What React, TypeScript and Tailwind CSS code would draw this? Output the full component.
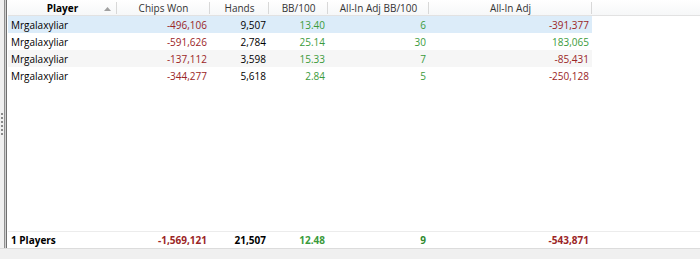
import React from 'react';

type Row = {
  player: string;
  chips: string;
  hands: string;
  bb: string;
  aiBb: string;
  aiAdj: string;
  aiAdjPos?: boolean;
};

const rows: Row[] = [
  { player: 'Mrgalaxyliar', chips: '-496,106', hands: '9,507', bb: '13.40', aiBb: '6', aiAdj: '-391,377' },
  { player: 'Mrgalaxyliar', chips: '-591,626', hands: '2,784', bb: '25.14', aiBb: '30', aiAdj: '183,065', aiAdjPos: true },
  { player: 'Mrgalaxyliar', chips: '-137,112', hands: '3,598', bb: '15.33', aiBb: '7', aiAdj: '-85,431' },
  { player: 'Mrgalaxyliar', chips: '-344,277', hands: '5,618', bb: '2.84', aiBb: '5', aiAdj: '-250,128' },
];

const red = 'text-[#9b2526]';
const green = 'text-[#3b9b3b]';

// header cell with the little splitter on its right
function Head({ w, label, bold, sort }: { w: string; label: string; bold?: boolean; sort?: boolean }) {
  return (
    <div className={`${w} relative flex h-full items-center justify-center`}>
      <span className={bold ? 'font-bold text-black' : 'text-[#333]'}>{label}</span>
      {sort && (
        <svg className="absolute right-[6px] top-[7px]" width="7" height="4" viewBox="0 0 7 4">
          <path d="M3.5 0 L7 4 L0 4 Z" fill="#a0a0a0" />
        </svg>
      )}
      <div className="absolute right-0 top-[2px] h-[12px] w-px bg-[#d8d8d8]" />
    </div>
  );
}

export default function App() {
  return (
    <div
      className="flex h-[259px] w-[700px] flex-col overflow-hidden bg-white text-[10px] leading-none text-black"
      style={{ fontFamily: '"Open Sans", "Liberation Sans", sans-serif' }}
    >
      <div className="flex min-h-0 flex-1">
        {/* splitter grip */}
        <div className="flex w-[4px] flex-col items-center justify-center gap-[2px] bg-[#f0f0f0]">
          {Array.from({ length: 6 }).map((_, i) => (
            <div key={i} className="h-[2px] w-[2px] bg-[#8a8a8a]" />
          ))}
        </div>
        <div className="w-px bg-[#8f8f8f]" />
        <div className="w-[1px] bg-[#d0d0d0]" />
        <div className="w-px bg-[#6f6f6f]" />
        <div className="w-[1px] bg-white" />

        <div className="flex min-w-0 flex-1 flex-col">
          {/* header */}
          <div className="flex h-[16px] shrink-0 border-b border-[#e2e2e2] bg-gradient-to-b from-white to-[#f6f7f8]">
            <Head w="w-[109px]" label="Player" bold sort />
            <Head w="w-[93px]" label="Chips Won" />
            <Head w="w-[59px]" label="Hands" />
            <Head w="w-[59px]" label="BB/100" />
            <Head w="w-[101px]" label="All-In Adj BB/100" />
            <Head w="w-[163px]" label="All-In Adj" />
          </div>

          {/* rows */}
          <div className="flex-1">
            {rows.map((r, i) => (
              <div
                key={i}
                className={`flex h-[17px] w-[584px] items-center ${
                  i === 0 ? 'bg-[#dcecf9]' : i === 2 ? 'bg-[#f6f6f6]' : 'bg-white'
                }`}
              >
                <div className="w-[109px] pl-[3px]">{r.player}</div>
                <div className={`w-[93px] pr-[3px] text-right ${red}`}>{r.chips}</div>
                <div className="w-[59px] pr-[3px] text-right">{r.hands}</div>
                <div className={`w-[59px] pr-[3px] text-right ${green}`}>{r.bb}</div>
                <div className={`w-[101px] pr-[3px] text-right ${green}`}>{r.aiBb}</div>
                <div className={`w-[163px] pr-[3px] text-right ${r.aiAdjPos ? green : red}`}>{r.aiAdj}</div>
              </div>
            ))}
          </div>

          {/* totals */}
          <div className="flex h-[17px] shrink-0 items-center border-t border-[#ececec] font-bold">
            <div className="w-[109px] pl-[3px]">1 Players</div>
            <div className={`w-[93px] pr-[3px] text-right ${red}`}>-1,569,121</div>
            <div className="w-[59px] pr-[3px] text-right">21,507</div>
            <div className={`w-[59px] pr-[3px] text-right ${green}`}>12.48</div>
            <div className="w-[101px] pr-[3px] text-right text-[#2f8a2f]">9</div>
            <div className={`w-[163px] pr-[3px] text-right ${red}`}>-543,871</div>
          </div>
        </div>
      </div>
      {/* bottom strip */}
      <div className="h-[11px] shrink-0 border-t border-[#dcdcdc] bg-[#f0f0f0]" />
    </div>
  );
}
